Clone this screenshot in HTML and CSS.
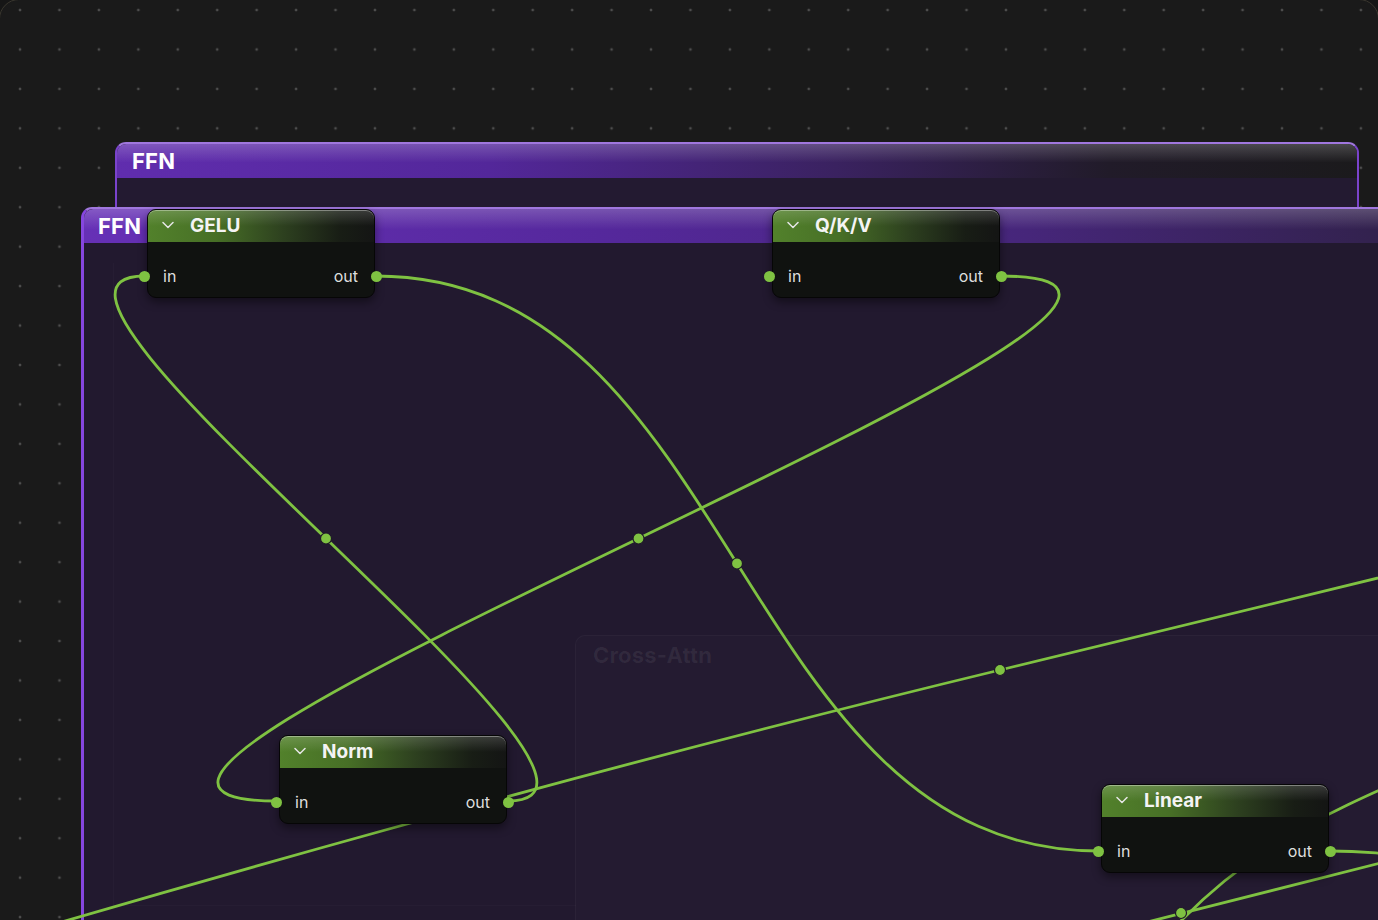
FILE: index.html
```html
<!DOCTYPE html>
<html lang="en">
<head>
    <meta charset="UTF-8">
    <meta name="viewport" content="width=device-width, initial-scale=1.0">
    <title>Graph Editor</title>
    <link rel="stylesheet" href="styles.css">
</head>
<body>
    <div class="canvas">
        <!-- groups -->
        <div class="group group-outer">
            <div class="group-head">FFN</div>
        </div>
        <div class="group group-inner">
            <div class="group-head">FFN</div>
            <div class="ghost"></div>
        </div>
        <div class="group group-faint">
            <div class="group-head">Cross-Attn</div>
        </div>

        <!-- wires -->
        <svg class="edges" width="1378" height="920" viewBox="0 0 1378 920">
            <g class="wire">
                <path d="M 507.5 801 C 689 801, -37 276, 144.5 276"/>
                <path d="M 375.5 276 C 737 276, 737 851, 1098.5 851"/>
                <path d="M 1000.5 276 C 1362.5 276, -85.5 801, 276.5 801"/>
                <path d="M -10 943 C 330 843, 690 745, 1000 670 S 1300 597, 1460 558"/>
                <path d="M 1329.5 851 C 1360 851, 1395 854, 1412 857"/>
                <path d="M 1412 855 L 1100 934"/>
                <path d="M 1420 772 C 1330 812, 1245 848, 1165 938"/>
            </g>
            <g class="wire-mid">
                <circle cx="326" cy="538.5" r="5.5"/>
                <circle cx="638.5" cy="538.5" r="5.5"/>
                <circle cx="737" cy="563.5" r="5.5"/>
                <circle cx="1000" cy="670" r="5.5"/>
                <circle cx="1181" cy="913" r="5.5"/>
            </g>
        </svg>

        <!-- nodes -->
        <div class="node node-gelu">
            <div class="node-head">
                <svg class="chevron" width="12" height="8" viewBox="0 0 12 8"><path d="M1 1.5 L6 6.5 L11 1.5"/></svg>
                <span class="node-title">GELU</span>
            </div>
            <div class="node-body">
                <span class="dot dot-in"></span>
                <span class="port">in</span>
                <span class="port">out</span>
                <span class="dot dot-out"></span>
            </div>
        </div>

        <div class="node node-qkv">
            <div class="node-head">
                <svg class="chevron" width="12" height="8" viewBox="0 0 12 8"><path d="M1 1.5 L6 6.5 L11 1.5"/></svg>
                <span class="node-title">Q/K/V</span>
            </div>
            <div class="node-body">
                <span class="dot dot-in"></span>
                <span class="port">in</span>
                <span class="port">out</span>
                <span class="dot dot-out"></span>
            </div>
        </div>

        <div class="node node-norm">
            <div class="node-head">
                <svg class="chevron" width="12" height="8" viewBox="0 0 12 8"><path d="M1 1.5 L6 6.5 L11 1.5"/></svg>
                <span class="node-title">Norm</span>
            </div>
            <div class="node-body">
                <span class="dot dot-in"></span>
                <span class="port">in</span>
                <span class="port">out</span>
                <span class="dot dot-out"></span>
            </div>
        </div>

        <div class="node node-linear">
            <div class="node-head">
                <svg class="chevron" width="12" height="8" viewBox="0 0 12 8"><path d="M1 1.5 L6 6.5 L11 1.5"/></svg>
                <span class="node-title">Linear</span>
            </div>
            <div class="node-body">
                <span class="dot dot-in"></span>
                <span class="port">in</span>
                <span class="port">out</span>
                <span class="dot dot-out"></span>
            </div>
        </div>
    </div>
</body>
</html>
```

FILE: styles.css
```css
* {
    box-sizing: border-box;
}
html, body {
    margin: 0;
    padding: 0;
    background: #161616;
    overflow: hidden;
}
body {
    font-family: Inter, "Noto Sans", sans-serif;
    width: 1378px;
    height: 920px;
}

/* dotted workspace */
.canvas {
    position: relative;
    width: 1380px;
    height: 960px;
    margin: -1px 0 0 -1px;
    border: 1px solid #3a372f;
    border-radius: 20px;
    overflow: hidden;
    background-color: #1a1a1a;
    background-image: radial-gradient(circle, #4e4e4e 1.1px, transparent 1.7px);
    background-size: 39.45px 39.45px;
    background-position: 0.3px -9.7px;
}

/* groups */
.group {
    position: absolute;
    border: 2px solid #7a43cc;
    border-top-color: #a077de;
    border-bottom: none;
    border-radius: 11px 11px 0 0;
    background: #231a31;
    z-index: 1;
}
.group-head {
    height: 34px;
    display: flex;
    align-items: center;
    padding-left: 15px;
    color: #fff;
    font-size: 22px;
    font-weight: 700;
    letter-spacing: 0.2px;
    border-radius: 9px 9px 0 0;
}
.group-outer {
    left: 115px;
    top: 142px;
    width: 1244px;
    height: 820px;
}
.group-outer .group-head {
    background:
        linear-gradient(180deg, rgba(255, 255, 255, 0.2) 0, rgba(255, 255, 255, 0) 55%),
        linear-gradient(90deg, #602dae 0, #53279a 30%, #3a2260 58%, #211b29 80%, #1b1a1c 100%);
}
.group-inner {
    left: 81px;
    top: 207px;
    width: 1720px;
    height: 760px;
    border-left-width: 3px;
    border-left-color: #8646df;
    background: #22192f;
}
.group-inner .group-head {
    padding-left: 14px;
    background:
        linear-gradient(180deg, rgba(255, 255, 255, 0.2) 0, rgba(255, 255, 255, 0) 60%),
        linear-gradient(90deg, #6630b6 0, #55289c 30%, #46267a 55%, #33224f 75%, #1e1a22 100%);
}
.ghost {
    position: absolute;
    left: 29px;
    top: 54px;
    width: 463px;
    height: 643px;
    border-left: 1px solid rgba(255, 255, 255, 0.02);
    border-bottom: 1px solid rgba(255, 255, 255, 0.02);
}
.group-faint {
    left: 575px;
    top: 635px;
    width: 900px;
    height: 400px;
    border: 1px solid rgba(255, 255, 255, 0.035);
    border-radius: 10px 10px 0 0;
    background: rgba(255, 255, 255, 0.012);
    z-index: 1;
}
.group-faint .group-head {
    height: 38px;
    padding-left: 17px;
    color: rgba(255, 255, 255, 0.065);
}

/* wires */
.edges {
    position: absolute;
    left: 0;
    top: 0;
    z-index: 2;
    overflow: visible;
}
.wire path {
    fill: none;
    stroke: #7fc242;
    stroke-width: 2.8;
}
.wire-mid circle {
    fill: #7fc242;
    stroke: #1f1729;
    stroke-width: 1.2;
}

/* nodes */
.node {
    position: absolute;
    width: 228px;
    border: 1px solid #060606;
    border-radius: 9px;
    background: #101210;
    box-shadow: 0 4px 10px rgba(0, 0, 0, 0.45);
    z-index: 3;
}
.node-gelu {
    left: 147px;
    top: 209px;
}
.node-qkv {
    left: 772px;
    top: 209px;
}
.node-norm {
    left: 279px;
    top: 735px;
}
.node-linear {
    left: 1101px;
    top: 784px;
}
.node-head {
    height: 32px;
    display: flex;
    align-items: center;
    padding: 0 0 2px 14px;
    gap: 16px;
    border-radius: 8px 8px 0 0;
    background:
        linear-gradient(180deg, rgba(255, 255, 255, 0.16) 0, rgba(255, 255, 255, 0) 50%),
        linear-gradient(90deg, #52812b 0, #476f26 30%, #2d401f 60%, #181d15 85%, #141514 100%);
    box-shadow: inset 0 1px 0 rgba(255, 255, 255, 0.35);
}
.chevron path {
    fill: none;
    stroke: #e6e6e6;
    stroke-width: 1.5;
    stroke-linecap: round;
    stroke-linejoin: round;
}
.node-title {
    color: #f4f4f4;
    font-size: 19px;
    font-weight: 700;
    line-height: 1;
}
.node-body {
    position: relative;
    height: 55px;
    padding: 12px 16px 0 15px;
    display: flex;
    justify-content: space-between;
}
.port {
    height: 44px;
    line-height: 44px;
    color: #dedede;
    font-size: 16px;
}
.dot {
    position: absolute;
    top: 28.5px;
    width: 11px;
    height: 11px;
    border-radius: 50%;
    background: #7fc242;
}
.dot-in {
    left: -9px;
}
.dot-out {
    right: -8px;
}
```
